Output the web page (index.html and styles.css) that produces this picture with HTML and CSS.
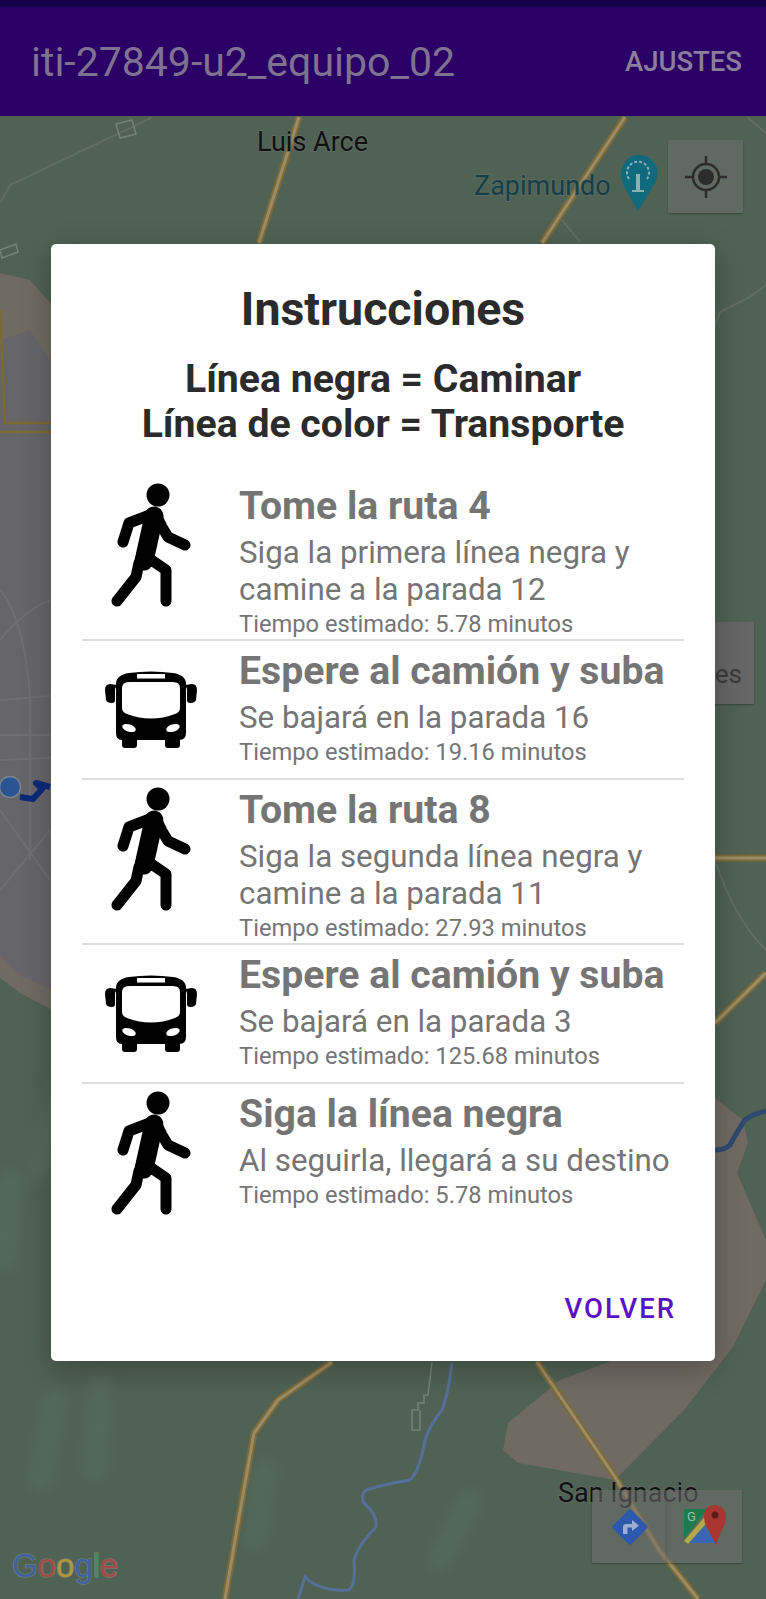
FILE: index.html
```html
<!DOCTYPE html>
<html lang="es">
<head>
  <meta charset="UTF-8">
  <meta name="viewport" content="width=device-width, initial-scale=1.0">
  <title>iti-27849-u2_equipo_02</title>
  <link rel="stylesheet" href="styles.css">
</head>
<body>
  <svg class="defs" width="0" height="0">
    <symbol id="caminar" viewBox="0 0 80 124">
      <circle cx="47" cy="12" r="11.5" fill="#000"/>
      <path d="M12 59 L18 40 L44 30 L51 44 L57 54 L74 62" fill="none" stroke="#000" stroke-width="11" stroke-linecap="round" stroke-linejoin="round"/>
      <path d="M43 33 L33 78" fill="none" stroke="#000" stroke-width="19" stroke-linecap="round"/>
      <path d="M36 74 L55 87 L55 118" fill="none" stroke="#000" stroke-width="11" stroke-linecap="round" stroke-linejoin="round"/>
      <path d="M28 80 L25 94 L6 118" fill="none" stroke="#000" stroke-width="11" stroke-linecap="round" stroke-linejoin="round"/>
    </symbol>
    <symbol id="camion" viewBox="0 0 92 78">
      <path d="M12 14 L5 13 Q0 13 0 19 L1 29 Q2 32 7 32 Q10 32 10 29 L10 18Z M80 14 L87 13 Q92 13 92 19 L91 29 Q90 32 85 32 Q82 32 82 29 L82 18Z" fill="#000"/>
      <path d="M11 13 Q11 4 24 2 Q46 -1 68 2 Q81 4 81 13 L81 62 Q81 69 74 69 L75 69 L75 74 Q75 77 72 77 L63 77 Q60 77 60 74 L60 69 L32 69 L32 74 Q32 77 29 77 L20 77 Q17 77 17 74 L17 69 Q11 69 11 62Z" fill="#000"/>
      <rect x="32" y="3" width="28" height="4.5" fill="#fff"/>
      <path d="M17 17 Q17 11 24 11 L68 11 Q75 11 75 17 L75 37 Q75 41 70 43 Q46 52 22 43 Q17 41 17 37Z" fill="#fff"/>
      <ellipse cx="24" cy="57" rx="7" ry="3.6" transform="rotate(18 24 57)" fill="#fff"/>
      <ellipse cx="68" cy="57" rx="7" ry="3.6" transform="rotate(-18 68 57)" fill="#fff"/>
    </symbol>
  </svg>

  <div class="pantalla">
    <div class="barra-estado"></div>
    <header class="barra-app">
      <h1>iti-27849-u2_equipo_02</h1>
      <span class="ajustes">AJUSTES</span>
    </header>

    <main class="mapa">
      <svg class="mapa-fondo" viewBox="0 116 766 1483" width="766" height="1483">
        <!-- zona urbana, arena y manchas -->
        <path class="tierra" d="M0 273 L30 280 L52 305 L52 1010 L20 993 L0 978Z"/>
        <path class="urbano" d="M0 340 L30 330 L50 360 L50 990 L20 975 L0 955Z"/>
        <path class="tierra" d="M715 1098 L743 1120 L748 1143 L737 1173 L750 1203 L766 1240 L766 1280 L733 1347 L684 1410 L615 1480 L518 1463 L503 1450 L508 1423 L560 1380 L611 1361 L700 1200Z"/>
        <path class="mancha" d="M55 1400 L40 1480 M100 1390 L95 1470 M265 1470 L255 1540 M440 1560 L470 1500 M60 1090 L40 1170 M10 1180 L5 1260"/>

        <!-- lineas delgadas -->
        <path class="calle" d="M151 118 L10 185 L0 203 M747 117 L766 133 M562 220 L581 243 M766 285 L750 297 L720 312 L715 325 M715 860 Q735 920 766 950"/>
        <path class="calle" d="M0 640 Q25 610 50 600 M0 590 Q25 620 30 700 L30 860 M0 700 L50 696 M0 735 L50 735 M0 760 L50 758 M0 810 L50 880 M0 890 L50 830"/>
        <path class="calle-fina" d="M116 124 L132 120 L136 134 L120 138Z M0 250 L16 244 L18 252 L2 258Z M432 1362 L428 1395 L424 1395 L424 1403 L418 1403 L418 1410 L412 1410 L412 1430 L420 1430 L420 1410"/>

        <!-- rio -->
        <path class="rio" d="M452 1363 Q448 1395 442 1410 Q430 1425 425 1440 Q420 1470 410 1480 Q385 1484 366 1490 Q360 1496 364 1503 Q378 1515 376 1527 Q358 1545 354 1560 Q356 1585 349 1590 Q320 1592 305 1577 L298 1599"/>
        <path class="rio rio-oscuro" d="M715 1150 Q725 1150 730 1145 Q738 1130 745 1120 Q752 1114 766 1111"/>

        <!-- carreteras -->
        <g class="carretera">
          <path d="M299 117 L259 243"/>
          <path d="M625 117 L542 243"/>
          <path d="M332 1362 L278 1400 L254 1433 L239 1517 L225 1599"/>
          <path d="M537 1362 L615 1477 L659 1550 L698 1599"/>
          <path d="M715 858 L766 858"/>
          <path d="M715 1023 L766 973"/>
        </g>
        <g class="carretera-centro">
          <path d="M299 117 L259 243"/>
          <path d="M625 117 L542 243"/>
          <path d="M332 1362 L278 1400 L254 1433 L239 1517 L225 1599"/>
          <path d="M537 1362 L615 1477 L659 1550 L698 1599"/>
          <path d="M715 858 L766 858"/>
          <path d="M715 1023 L766 973"/>
        </g>
        <path class="carretera-fina" d="M0 310 L5 423 L52 423 M0 432 L52 432"/>

        <!-- ruta -->
        <path class="ruta" d="M20 797 L33 799 L42 789 L36 783 L50 787"/>
        <circle cx="10" cy="787" r="10.5" fill="#2a5494" stroke="#7c8490" stroke-width="1.5"/>

        <text class="etiqueta" x="257" y="151">Luis Arce</text>
        <text class="etiqueta etiqueta-lugar" x="474" y="195">Zapimundo</text>
        <text class="etiqueta" x="558" y="1502">San Ignacio</text>

        <!-- pin de Zapimundo -->
        <path d="M638 211 L625 188 Q619 178 622 168 Q627 155 638 155 Q652 155 657 168 Q659 178 652 188Z" fill="#0e6a7c"/>
        <path d="M638 190 L638 174" fill="none" stroke="#8ab0b4" stroke-width="4"/>
        <path d="M629 179 A11 11 0 1 1 647 179" fill="none" stroke="#8ab0b4" stroke-width="2" stroke-dasharray="3 2"/>
        <path d="M632 191 H644" stroke="#8ab0b4" stroke-width="2"/>

        <text class="google" x="12" y="1577"><tspan fill="#3f639f">G</tspan><tspan fill="#a34b44">o</tspan><tspan fill="#b4963a">o</tspan><tspan fill="#3f639f">g</tspan><tspan fill="#4a8a58">l</tspan><tspan fill="#a34b44">e</tspan></text>
      </svg>

      <div class="boton-mapa boton-lugares"><span>es</span></div>

      <div class="boton-mapa boton-ubicacion">
        <svg width="42" height="42" viewBox="0 0 42 42">
          <circle cx="21" cy="21" r="13" fill="none" stroke="#2c2c2c" stroke-width="2.5"/>
          <circle cx="21" cy="21" r="8" fill="#2c2c2c"/>
          <path d="M21 0 V8 M21 34 V42 M0 21 H8 M34 21 H42" stroke="#2c2c2c" stroke-width="2.5"/>
        </svg>
      </div>

      <div class="herramientas">
        <div class="boton-mapa">
          <svg width="40" height="40" viewBox="0 0 40 40">
            <rect x="7" y="7" width="26" height="26" rx="2" transform="rotate(45 20 20)" fill="#2c58ad"/>
            <path d="M13 27 V20 Q13 17 16 17 H22 V13 L29 18.5 L22 24 V20.5 H17.500 V27Z" fill="#9eaed0"/>
          </svg>
        </div>
        <div class="boton-mapa">
          <svg width="42" height="44" viewBox="0 0 42 44">
            <path d="M0 4 H24 L0 34Z" fill="#1f7a4d"/>
            <path d="M5 38 L20 21 L34 38Z" fill="#3a66b4"/>
            <path d="M0 36 L24 8 L28 12 L4 39 Z" fill="#b5a84a"/>
            <path d="M32 40 L24 24 Q20 18 20 12 Q20 0 32 0 Q42 2 42 12 Q42 18 38 24Z" fill="#a83530"/>
            <circle cx="31" cy="10" r="3.500" fill="#5f1c1a"/>
            <text class="letra-g" x="3" y="16">G</text>
          </svg>
        </div>
      </div>
    </main>

    <section class="dialogo">
      <h2>Instrucciones</h2>
      <p class="leyenda">Línea negra = Caminar<br>Línea de color = Transporte</p>

      <ul class="pasos">
        <li class="paso">
          <div class="paso-icono"><svg width="80" height="124"><use href="#caminar"/></svg></div>
          <div class="paso-texto">
            <h3>Tome la ruta 4</h3>
            <p class="detalle">Siga la primera línea negra y camine a la parada 12</p>
            <p class="tiempo">Tiempo estimado: 5.78 minutos</p>
          </div>
        </li>
        <li class="paso">
          <div class="paso-icono"><svg width="92" height="78"><use href="#camion"/></svg></div>
          <div class="paso-texto">
            <h3>Espere al camión y suba</h3>
            <p class="detalle">Se bajará en la parada 16</p>
            <p class="tiempo">Tiempo estimado: 19.16 minutos</p>
          </div>
        </li>
        <li class="paso">
          <div class="paso-icono"><svg width="80" height="124"><use href="#caminar"/></svg></div>
          <div class="paso-texto">
            <h3>Tome la ruta 8</h3>
            <p class="detalle">Siga la segunda línea negra y camine a la parada 11</p>
            <p class="tiempo">Tiempo estimado: 27.93 minutos</p>
          </div>
        </li>
        <li class="paso">
          <div class="paso-icono"><svg width="92" height="78"><use href="#camion"/></svg></div>
          <div class="paso-texto">
            <h3>Espere al camión y suba</h3>
            <p class="detalle">Se bajará en la parada 3</p>
            <p class="tiempo">Tiempo estimado: 125.68 minutos</p>
          </div>
        </li>
        <li class="paso">
          <div class="paso-icono"><svg width="80" height="124"><use href="#caminar"/></svg></div>
          <div class="paso-texto">
            <h3>Siga la línea negra</h3>
            <p class="detalle">Al seguirla, llegará a su destino</p>
            <p class="tiempo">Tiempo estimado: 5.78 minutos</p>
          </div>
        </li>
      </ul>

      <div class="dialogo-pie">
        <button class="volver">VOLVER</button>
      </div>
    </section>
  </div>
</body>
</html>
```

FILE: styles.css
```css
* {
  box-sizing: border-box;
}

body {
  margin: 0;
  background: #4f6253;
  font-family: Roboto, "Liberation Sans", sans-serif;
}

.defs {
  position: absolute;
}

.pantalla {
  width: 766px;
  height: 1599px;
  display: flex;
  flex-direction: column;
  position: relative;
  overflow: hidden;
}

.barra-estado {
  height: 7px;
  background: #17004a;
}

.barra-app {
  height: 109px;
  background: #2a0066;
  padding: 0 24px 0 31px;
  display: flex;
  align-items: center;
  justify-content: space-between;
  box-shadow: 0 1px 3px rgba(0, 0, 0, 0.4);
  position: relative;
}

.barra-app h1 {
  margin: 0;
  color: #7f7291;
  font-size: 41px;
  font-weight: 400;
}

.ajustes {
  color: #8a7e9a;
  font-size: 27.5px;
  font-weight: 500;
}

.mapa {
  flex: 1;
  position: relative;
  background: #4f6253;
}

.mapa-fondo {
  display: block;
}

.tierra {
  fill: #706a62;
}

.urbano {
  fill: #666569;
}

.mancha {
  fill: none;
  stroke: #566a5b;
  stroke-width: 22;
  stroke-linecap: round;
  filter: blur(7px);
}

.calle {
  fill: none;
  stroke: #7a7f7a;
  stroke-width: 2;
  opacity: 0.4;
}

.calle-fina {
  fill: none;
  stroke: #74827a;
  stroke-width: 1.5;
}

.rio {
  fill: none;
  stroke: #55709a;
  stroke-width: 3;
}

.rio-oscuro {
  stroke: #2f4a70;
  stroke-width: 5;
}

.carretera path {
  fill: none;
  stroke: #7c6a3a;
  stroke-width: 7;
}

.carretera-centro path {
  fill: none;
  stroke: #9a8c64;
  stroke-width: 3;
}

.carretera-fina {
  fill: none;
  stroke: #7d6a30;
  stroke-width: 2.5;
}

.ruta {
  fill: none;
  stroke: #0d2a7a;
  stroke-width: 6;
  stroke-linejoin: round;
}

.etiqueta {
  font-size: 27px;
  fill: #111;
  paint-order: stroke;
  stroke: #5c6a60;
  stroke-width: 2px;
}

.etiqueta-lugar {
  fill: #143f4a;
}

.google {
  font-family: "Liberation Sans", sans-serif;
  font-size: 33px;
  paint-order: stroke;
  stroke: #6d7b71;
  stroke-width: 1.5px;
}

.letra-g {
  font-size: 13px;
  fill: #9fbfa8;
}

.boton-mapa {
  width: 75px;
  height: 73px;
  background: rgba(112, 112, 112, 0.55);
  border-radius: 1px;
  box-shadow: 0 1px 2px rgba(0, 0, 0, 0.3);
  display: flex;
  align-items: center;
  justify-content: center;
}

.boton-ubicacion {
  position: absolute;
  top: 24px;
  left: 668px;
}

.boton-lugares {
  position: absolute;
  top: 506px;
  left: 620px;
  width: 134px;
  height: 82px;
  background: #666;
  justify-content: flex-end;
  align-items: flex-end;
  padding: 0 12px 15px 0;
  color: #3a3a3a;
  font-size: 26px;
}

.herramientas {
  position: absolute;
  top: 1374px;
  left: 592px;
  display: flex;
}

.dialogo {
  position: absolute;
  top: 244px;
  left: 51px;
  width: 664px;
  height: 1117px;
  background: #fff;
  border-radius: 5px;
  box-shadow: 0 8px 30px rgba(0, 0, 0, 0.25);
  padding: 38px 31px 29px;
  display: flex;
  flex-direction: column;
}

.dialogo h2 {
  margin: 0;
  color: #2b2b2b;
  font-size: 46.5px;
  font-weight: 700;
  line-height: 54px;
  text-align: center;
}

.leyenda {
  margin: 21px 0 0;
  color: #2b2b2b;
  font-size: 39.2px;
  font-weight: 700;
  line-height: 45px;
  text-align: center;
}

.pasos {
  list-style: none;
  margin: 29px 0 0;
  padding: 0;
}

.paso {
  display: flex;
  gap: 19px;
  border-bottom: 2px solid #ddd;
}

.paso:last-child {
  border-bottom: 0;
}

.paso-icono {
  width: 138px;
  height: 137px;
  flex-shrink: 0;
  display: flex;
  align-items: center;
  justify-content: center;
}

.paso-texto {
  flex: 1;
  padding-top: 8px;
}

.paso-texto h3 {
  margin: 0 0 6px;
  color: #757575;
  font-size: 39.2px;
  font-weight: 700;
  line-height: 44px;
  white-space: nowrap;
}

.detalle {
  margin: 0;
  color: #757575;
  font-size: 31.3px;
  line-height: 37px;
}

.tiempo {
  margin: 2px 0 0;
  color: #757575;
  font-size: 23.7px;
  line-height: 29px;
}

.dialogo-pie {
  margin-top: auto;
  display: flex;
  justify-content: flex-end;
}

.volver {
  background: none;
  border: 0;
  padding: 0 8px;
  color: #5a12c4;
  font-family: inherit;
  font-size: 27.5px;
  font-weight: 500;
  letter-spacing: 2px;
  height: 48px;
}
```
